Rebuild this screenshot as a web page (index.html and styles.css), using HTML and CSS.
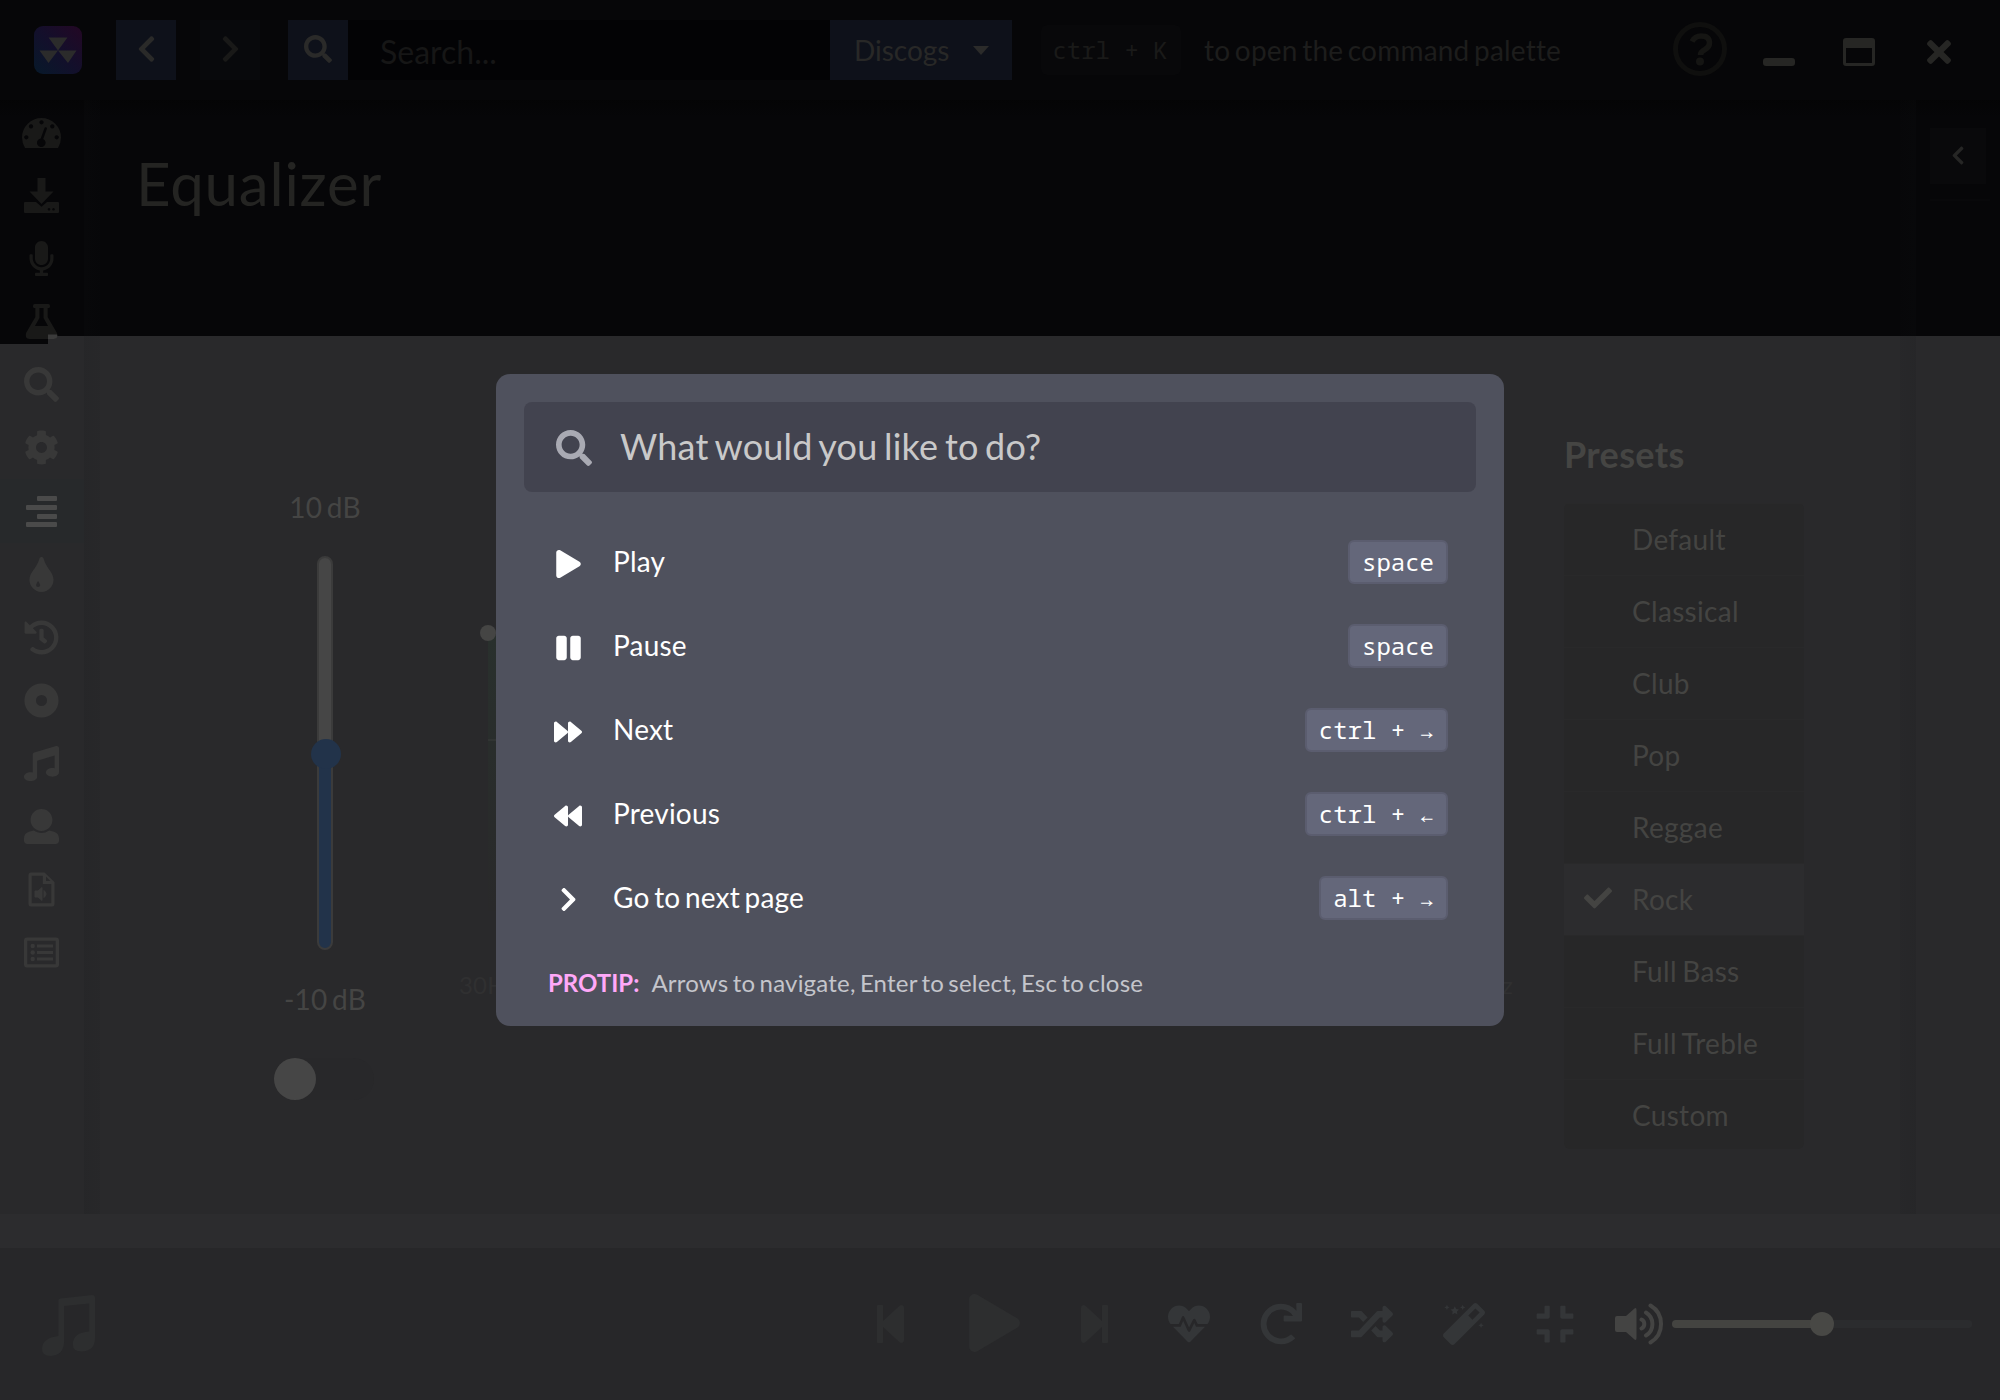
FILE: index.html
```html
<!DOCTYPE html>
<html lang="en">
<head>
<meta charset="utf-8">
<title>Equalizer</title>
<link rel="stylesheet" href="styles.css">
</head>
<body>
<svg class="defs" width="0" height="0">
  <symbol id="search" viewBox="0 0 512 512"><path d="M505 442.7L405.3 343c-4.500-4.500-10.600-7-17-7H372c27.600-35.300 44-79.700 44-128C416 93.100 322.900 0 208 0S0 93.100 0 208s93.100 208 208 208c48.300 0 92.700-16.400 128-44v16.300c0 6.400 2.500 12.500 7 17l99.700 99.700c9.400 9.400 24.600 9.400 33.900 0l28.300-28.300c9.400-9.400 9.400-24.600.1-34zM208 336c-70.700 0-128-57.200-128-128 0-70.700 57.200-128 128-128 70.700 0 128 57.200 128 128 0 70.700-57.200 128-128 128z"/></symbol>
  <symbol id="chevron" viewBox="0 0 320 512"><path d="M285.476 272.971L91.132 467.314c-9.373 9.373-24.569 9.373-33.941 0l-22.667-22.667c-9.357-9.357-9.375-24.522-.04-33.901L188.505 256 34.484 101.255c-9.335-9.379-9.317-24.544.04-33.901l22.667-22.667c9.373-9.373 24.569-9.373 33.941 0L285.475 239.030c9.373 9.372 9.373 24.568.001 33.941z"/></symbol>
  <symbol id="play" viewBox="0 0 448 512"><path d="M424.400 214.700L72.400 6.600C43.800-10.300 0 6.100 0 47.900V464c0 37.500 40.700 60.100 72.400 41.300l352-208c31.400-18.500 31.500-64.100 0-82.600z"/></symbol>
  <symbol id="forward" viewBox="0 0 512 512"><path d="M500.500 231.400l-192-160C287.900 54.300 256 68.600 256 96v320c0 27.400 31.900 41.800 52.500 24.600l192-160c15.300-12.800 15.300-36.400 0-49.200zm-256 0l-192-160C31.900 54.300 0 68.600 0 96v320c0 27.400 31.900 41.800 52.500 24.600l192-160c15.300-12.800 15.300-36.400 0-49.200z"/></symbol>
  <symbol id="step" viewBox="64 32 320 448"><path d="M64 468V44c0-6.600 5.400-12 12-12h48c6.600 0 12 5.400 12 12v176.400l195.500-181C352.100 22.300 384 36.600 384 64v384c0 27.400-31.900 41.700-52.500 24.600L136 292.700V468c0 6.600-5.400 12-12 12H76c-6.600 0-12-5.400-12-12z"/></symbol>
  <symbol id="flask" viewBox="0 0 512 512"><path fill-rule="evenodd" d="M154 0h204q22 0 22 24v16q0 20-22 20h-12v130l134 232q28 90-50 90H82q-78 0-50-90L166 190V60h-12q-22 0-22-20V24q0-24 22-24zM226 60v145l-66 115h192l-66-115V60z"/></symbol>
</svg>
<div class="app">
  <header class="topbar">
    <svg class="logo" viewBox="0 0 48 48">
      <defs><linearGradient id="lg" x1="0" y1="1" x2="1" y2="0"><stop offset="0" stop-color="#07192a"/><stop offset=".5" stop-color="#130f2b"/><stop offset="1" stop-color="#230724"/></linearGradient></defs>
      <rect width="48" height="48" rx="9" fill="url(#lg)"/>
      <path d="M14.500 11.500h19L24 24.500h18.500L34 37 24 24.500 14.500 37 5.500 24.500H24z" fill="#2b2b2b"/>
    </svg>
    <button class="square back"><svg class="flip chev"><use href="#chevron"/></svg></button>
    <button class="square next"><svg class="chev"><use href="#chevron"/></svg></button>
    <div class="searchbox">
      <button class="square"><svg class="glass"><use href="#search"/></svg></button>
      <span class="field">Search...</span>
      <span class="source">Discogs<i class="caret"></i></span>
    </div>
    <kbd class="hintkey">ctrl + K</kbd>
    <span class="hint">to open the command palette</span>
    <svg class="help" viewBox="0 0 54 54"><circle cx="27" cy="27" r="24.500" fill="none" stroke="#0f0f0e" stroke-width="5"/><path d="M19 19.500Q22 14 28 14q8.500 0 8.500 7 0 4-4.500 6.500-4.500 2.300-4.500 5.500" fill="none" stroke="#151513" stroke-width="5.500"/><circle cx="27" cy="39.500" r="4" fill="#151513"/></svg>
    <div class="window">
      <svg viewBox="0 0 32 28"><rect y="20" width="32" height="8" rx="3"/></svg>
      <svg viewBox="0 0 32 28"><path fill-rule="evenodd" d="M3 0h26q3 0 3 3v22q0 3-3 3H3q-3 0-3-3V3q0-3 3-3zM3 10v15h26V10z"/></svg>
      <svg class="close" viewBox="0 80 352 352"><path d="M242.720 256l100.070-100.070c12.280-12.280 12.280-32.190 0-44.480l-22.240-22.240c-12.280-12.280-32.190-12.280-44.480 0L176 189.280 75.930 89.210c-12.280-12.280-32.190-12.280-44.480 0L9.210 111.450c-12.280 12.280-12.280 32.190 0 44.480L109.280 256 9.210 356.070c-12.280 12.280-12.280 32.190 0 44.480l22.240 22.240c12.280 12.280 32.200 12.280 44.480 0L176 322.720l100.070 100.070c12.280 12.280 32.200 12.280 44.480 0l22.240-22.240c12.280-12.280 12.280-32.190 0-44.480L242.720 256z"/></svg>
    </div>
  </header>

  <div class="middle">
    <nav class="side">
      <a class="dim"><svg class="wide" viewBox="0 0 39 30"><path fill-rule="evenodd" d="M3 30Q0 25 0 19.500A19.500 19.500 0 0 1 39 19.500Q39 25 36 30zM22.500 10l-3.800 10.500a4.300 4.300 0 1 0 2.500.4L25 10.500a1.300 1.300 0 0 0-2.500-.5zM19.500 2.200a2.100 2.100 0 1 0 .01 0zM9 6.300a2.100 2.100 0 1 0 .01 0zM30.300 6.300a2.100 2.100 0 1 0 .01 0zM4.300 17.200a2.100 2.100 0 1 0 .01 0zM34.700 17.200a2.100 2.100 0 1 0 .01 0z"/></svg></a>
      <a class="dim"><svg viewBox="0 0 35 35"><path fill-rule="evenodd" d="M13.500 0h8v13.500h8L17.500 26 5.500 13.500h8zM0 25q0-1 1-1h11l5.500 4.800L23 24h11q1 0 1 1v9q0 1-1 1H1q-1 0-1-1zM25 30a1.300 1.300 0 1 0 .01 0zM29.500 30a1.300 1.300 0 1 0 .01 0z"/></svg></a>
      <a class="dim"><svg viewBox="-80 0 512 512"><path d="M176 352c53.020 0 96-42.980 96-96V96c0-53.020-42.980-96-96-96S80 42.980 80 96v160c0 53.020 42.980 96 96 96zm160-160h-16c-8.840 0-16 7.160-16 16v48c0 74.800-64.490 134.820-140.790 127.380C96.710 376.890 48 317.110 48 250.300V208c0-8.840-7.160-16-16-16H16c-8.840 0-16 7.160-16 16v40.160c0 89.640 63.970 169.550 152 181.690V464H96c-8.840 0-16 7.160-16 16v16c0 8.840 7.160 16 16 16h160c8.840 0 16-7.160 16-16v-16c0-8.840-7.160-16-16-16h-56v-33.770C285.710 418.470 352 344.900 352 256v-48c0-8.840-7.160-16-16-16z"/></svg></a>
      <a class="dim"><svg viewBox="0 0 35 35"><defs><clipPath id="corner"><rect x="24" y="30.500" width="11" height="5"/></clipPath></defs><use href="#flask" width="35" height="35"/><use href="#flask" width="35" height="35" clip-path="url(#corner)" fill="#3b3b3b"/></svg></a>
      <a><svg><use href="#search"/></svg></a>
      <a><svg viewBox="0 0 512 512"><path d="M487.400 315.700l-42.600-24.600c4.300-23.200 4.300-47 0-70.200l42.600-24.600c4.900-2.800 7.100-8.600 5.500-14-11.100-35.600-30-67.800-54.700-94.600-3.800-4.100-10-5.100-14.800-2.300L380.800 110c-17.900-15.400-38.500-27.300-60.800-35.100V25.800c0-5.600-3.900-10.500-9.400-11.700-36.700-8.200-74.300-7.800-109.200 0-5.500 1.200-9.400 6.100-9.400 11.700V75c-22.200 7.900-42.800 19.800-60.800 35.100L88.700 85.500c-4.900-2.800-11-1.900-14.800 2.300-24.700 26.700-43.600 58.900-54.700 94.600-1.700 5.400.6 11.200 5.500 14L67.300 221c-4.300 23.200-4.300 47 0 70.200l-42.600 24.600c-4.900 2.800-7.100 8.600-5.500 14 11.100 35.600 30 67.800 54.700 94.600 3.800 4.100 10 5.100 14.800 2.300l42.600-24.600c17.900 15.400 38.500 27.300 60.800 35.100v49.200c0 5.600 3.900 10.500 9.400 11.700 36.700 8.200 74.300 7.800 109.200 0 5.500-1.200 9.400-6.100 9.400-11.700v-49.200c22.200-7.900 42.800-19.800 60.800-35.100l42.600 24.600c4.900 2.800 11 1.900 14.800-2.300 24.700-26.700 43.600-58.900 54.700-94.600 1.500-5.500-.7-11.300-5.600-14.100zM256 336c-44.100 0-80-35.900-80-80s35.900-80 80-80 80 35.900 80 80-35.900 80-80 80z"/></svg></a>
      <a class="active"><svg viewBox="0 0 35 35"><rect x="13" y="2" width="20" height="5" rx="1"/><rect x="2" y="11" width="31" height="5" rx="1"/><rect x="13" y="20" width="20" height="5" rx="1"/><rect x="2" y="28" width="31" height="5" rx="1"/></svg></a>
      <a><svg viewBox="-80 0 512 512"><path fill-rule="evenodd" d="M205.220 22.090c-7.940-28.780-49.440-30.120-58.440 0C100.010 179.850 0 222.720 0 333.910 0 432.350 78.720 512 176 512s176-79.650 176-178.090c0-111.750-99.790-153.340-146.780-311.820zM126 350q30 42 30 60a30 30 0 0 1-60 0q0-18 30-60z"/></svg></a>
      <a><svg viewBox="0 0 512 512"><path d="M504 255.531c.253 136.640-111.180 248.372-247.820 248.468-59.015.042-113.223-20.530-155.822-54.911-11.077-8.940-11.905-25.541-1.839-35.607l11.267-11.267c8.609-8.609 22.353-9.551 31.891-1.984C173.062 425.135 212.781 440 256 440c101.705 0 184-82.311 184-184 0-101.705-82.311-184-184-184-48.814 0-93.149 18.969-126.068 49.932l50.754 50.754c10.080 10.080 2.941 27.314-11.313 27.314H24c-8.837 0-16-7.163-16-16V38.627c0-14.254 17.234-21.393 27.314-11.314l49.372 49.372C129.209 34.136 189.552 8 256 8c136.810 0 247.747 110.780 248 247.531zm-180.912 78.784l9.823-12.630c8.138-10.463 6.253-25.542-4.210-33.679L288 256.349V152c0-13.255-10.745-24-24-24h-16c-13.255 0-24 10.745-24 24v135.651l65.409 50.874c10.463 8.137 25.541 6.253 33.679-4.210z"/></svg></a>
      <a><svg viewBox="0 0 35 35"><circle cx="17.500" cy="17.500" r="11.300" fill="none" stroke="#383838" stroke-width="11.500"/></svg></a>
      <a><svg viewBox="0 0 512 512"><path d="M512 32c0-22-21-37-42-30.500L150.400 96c-13.300 4.200-22.400 16.500-22.400 30.500v261.420c-10-2.380-20.700-3.920-32-3.920-53 0-96 28.650-96 64s43 64 96 64 96-28.650 96-64V214.310l256-75.020v184.630c-10-2.380-20.700-3.920-32-3.920-53 0-96 28.650-96 64s43 64 96 64 96-28.650 96-64z"/></svg></a>
      <a><svg viewBox="0 0 512 512"><path d="M256 0c88.366 0 160 71.634 160 160s-71.634 160-160 160S96 248.366 96 160 167.634 0 256 0zm183.283 333.821l-71.313-17.828c-74.923 53.890-165.738 41.864-223.940 0l-71.313 17.828C29.981 344.505 0 382.903 0 426.955V464c0 26.510 21.490 48 48 48h416c26.510 0 48-21.490 48-48v-37.045c0-44.052-29.981-82.450-72.717-93.134z"/></svg></a>
      <a><svg viewBox="0 0 35 35"><path fill-rule="evenodd" d="M7 .5h13.500L30.500 10v22q0 2.500-2.500 2.500H7Q4.500 34.500 4.500 32V3Q4.500.5 7 .5zM7.700 3.700v27.600h19.600V12h-8.500V3.700zM22 4.500V9h4.500z"/><path d="M11 19h3l4-3.500v13L14 25h-3zM20 18.500q4 3.500 0 7z" stroke="#383838" stroke-width="1"/></svg></a>
      <a><svg viewBox="0 0 35 35"><path fill-rule="evenodd" d="M3 2.500h29q3 0 3 3v24q0 3-3 3H3q-3 0-3-3v-24q0-3 3-3zM3.300 5.800v23.400h28.400V5.800z"/><circle cx="8.700" cy="11" r="2.200"/><circle cx="8.700" cy="17.500" r="2.200"/><circle cx="8.700" cy="24" r="2.200"/><path d="M13 9.500h16v3H13zM13 16h16v3H13zM13 22.500h16v3H13z"/></svg></a>
    </nav>
    <main class="page">
      <h1>Equalizer</h1>
      <div class="equalizer">
        <div class="preamp">
          <span>10 dB</span>
          <div class="vslider"><i></i></div>
          <span>-10 dB</span>
          <div class="toggle"><i></i></div>
        </div>
        <div class="chart">
          <svg viewBox="0 0 1040 300"><defs><linearGradient id="area" x1="0" y1="0" x2="0" y2="1"><stop offset="0" stop-color="#29302d"/><stop offset="1" stop-color="#29292a"/></linearGradient></defs><path d="M8 8Q200 60 500 180T1016 30V286H8z" fill="url(#area)"/><path d="M8 115h1008" stroke="#3a3d3b"/><circle cx="8" cy="8" r="8" fill="#454544"/></svg>
          <div class="freqs"><span>30Hz</span><span>15KHz</span></div>
        </div>
        <section class="presets">
          <h2>Presets</h2>
          <ul>
            <li>Default</li><li>Classical</li><li>Club</li><li>Pop</li><li>Reggae</li>
            <li class="on"><svg viewBox="0 62 512 388"><path d="M173.898 439.404l-166.400-166.400c-9.997-9.997-9.997-26.206 0-36.204l36.203-36.204c9.997-9.998 26.207-9.998 36.204 0L192 312.690 432.095 72.596c9.997-9.997 26.207-9.997 36.204 0l36.203 36.204c9.997 9.997 9.997 26.206 0 36.204l-294.400 294.401c-9.998 9.997-26.207 9.997-36.204-.001z"/></svg>Rock</li>
            <li>Full Bass</li><li>Full Treble</li><li>Custom</li>
          </ul>
        </section>
      </div>
    </main>
    <aside class="queue"><button><svg class="flip"><use href="#chevron"/></svg></button><hr></aside>
  </div>
  <div class="seek"></div>
  <footer class="player">
    <svg class="cover" viewBox="0 0 55 61" preserveAspectRatio="none"><path fill-rule="evenodd" d="M17 5.500Q17 4 19 3.500L52 0q3 0 3 3v40q0 13-14 13.500-9 0-9-7 0-12 17-13V8.500L23 11v35q0 14-14 15-9 0-9-7 0-11 17-13z"/></svg>
    <svg class="step"><use href="#step"/></svg>
    <svg class="bigplay"><use href="#play"/></svg>
    <svg class="step flip"><use href="#step"/></svg>
    <div class="modes">
      <svg viewBox="0 0 512 512"><path d="M320.200 243.800l-49.700 99.400c-6 12.100-23.400 11.700-28.900-.6l-56.900-126.300-30 71.700H60.600l182.500 186.500c7.100 7.300 18.600 7.300 25.700 0L451.400 288H342.300l-22.100-44.200zM473.700 73.900l-2.400-2.500c-51.500-52.600-135.800-52.600-187.400 0L256 100l-27.900-28.500c-51.500-52.700-135.900-52.700-187.400 0l-2.400 2.400C-10.400 123.700-12.500 203 31 256h102.400l35.900-86.200c5.400-12.900 23.600-13.100 29.400-.4l58.200 129.300 49-97.900c5.900-11.800 22.700-11.800 28.600 0l27.600 55.200H481c43.500-53 41.400-132.300-7.300-182.100z"/></svg>
      <svg viewBox="0 0 512 512"><path d="M500.330 0h-47.410a12 12 0 0 0-12 12.570l4 82.760A247.420 247.420 0 0 0 256 8C119.340 8 7.900 119.530 8 256.190 8.100 393.070 119.100 504 256 504a247.100 247.100 0 0 0 166.180-63.910 12 12 0 0 0 .48-17.430l-34-34a12 12 0 0 0-16.380-.55A176 176 0 1 1 402.100 157.800l-101.530-4.870a12 12 0 0 0-12.570 12v47.410a12 12 0 0 0 12 12h200.330a12 12 0 0 0 12-12V12a12 12 0 0 0-12-12z"/></svg>
      <svg viewBox="0 0 512 512"><path d="M504.971 359.029c9.373 9.373 9.373 24.569 0 33.941l-80 79.984c-15.010 15.010-40.971 4.490-40.971-16.971V416h-58.785a12.004 12.004 0 0 1-8.773-3.812l-70.556-75.596 53.333-57.143L352 336h32v-39.981c0-21.438 25.943-31.998 40.971-16.971l80 79.981zM12 176h84l52.781 56.551 53.333-57.143-70.556-75.596A11.999 11.999 0 0 0 122.785 96H12c-6.627 0-12 5.373-12 12v56c0 6.627 5.373 12 12 12zm372 0v39.984c0 21.460 25.961 31.980 40.971 16.971l80-79.984c9.373-9.373 9.373-24.569 0-33.941l-80-79.981C409.943 24.021 384 34.582 384 56.019V96h-58.785a12.004 12.004 0 0 0-8.773 3.812L96 336H12c-6.627 0-12 5.373-12 12v56c0 6.627 5.373 12 12 12h110.785c3.326 0 6.503-1.381 8.773-3.812L352 176h32z"/></svg>
      <svg viewBox="0 0 512 512"><path d="M502.620 94.230L417.770 9.380C411.530 3.120 403.340 0 395.150 0c-8.190 0-16.380 3.120-22.630 9.380L9.380 372.520c-12.500 12.500-12.500 32.760 0 45.250l84.850 84.850c6.250 6.250 14.440 9.370 22.620 9.370 8.190 0 16.380-3.120 22.630-9.370l363.140-363.150c12.500-12.480 12.500-32.750 0-45.240zM359.450 203.460l-50.910-50.910 86.600-86.600 50.910 50.910-86.600 86.600z"/><path d="M144 40l16 33 35 5-25 25 6 36-32-17-32 17 6-36-25-25 35-5zM48 22l10 22 22 10-22 10-10 22-10-22-22-10 22-10zM240 22l10 22 22 10-22 10-10 22-10-22-22-10 22-10zM464 240l10 22 22 10-22 10-10 22-10-22-22-10 22-10z"/></svg>
      <svg viewBox="-32 0 512 512"><path d="M436 192H312c-13.300 0-24-10.700-24-24V44c0-6.600 5.400-12 12-12h40c6.600 0 12 5.400 12 12v84h84c6.600 0 12 5.400 12 12v40c0 6.600-5.400 12-12 12zm-276-24V44c0-6.600-5.400-12-12-12h-40c-6.600 0-12 5.400-12 12v84H12c-6.600 0-12 5.400-12 12v40c0 6.600 5.400 12 12 12h124c13.300 0 24-10.700 24-24zm0 300V344c0-13.300-10.700-24-24-24H12c-6.600 0-12 5.400-12 12v40c0 6.600 5.400 12 12 12h84v84c0 6.600 5.400 12 12 12h40c6.600 0 12-5.400 12-12zm192 0v-84h84c6.600 0 12-5.400 12-12v-40c0-6.600-5.400-12-12-12H312c-13.300 0-24 10.700-24 24v124c0 6.600 5.400 12 12 12h40c6.600 0 12-5.400 12-12z"/></svg>
    </div>
    <svg class="volume" viewBox="0 0 49 42"><path d="M2 13h9l8.500-7.500q2-1.300 2 1.500v28q0 2.800-2 1.500L11 29H2q-2 0-2-2V15q0-2 2-2z"/><path d="M26.500 16.500a5 5 0 0 1 0 9M31 9.500a13.500 13.500 0 0 1 0 23M35.500 2.500a21.500 21.500 0 0 1 0 37" fill="none" stroke="#444443" stroke-width="4" stroke-linecap="round"/></svg>
    <div class="volbar"><i></i></div>
  </footer>
</div>

<div class="palette">
  <div class="prompt"><svg><use href="#search"/></svg><span>What would you like to do?</span></div>
  <ul>
    <li><svg class="p"><use href="#play"/></svg><span>Play</span><kbd>space</kbd></li>
    <li><svg class="p" viewBox="0 0 448 512"><path d="M144 479H48c-26.500 0-48-21.500-48-48V79c0-26.500 21.500-48 48-48h96c26.500 0 48 21.500 48 48v352c0 26.500-21.500 48-48 48zm304-48V79c0-26.500-21.500-48-48-48h-96c-26.500 0-48 21.500-48 48v352c0 26.500 21.500 48 48 48h96c26.500 0 48-21.500 48-48z"/></svg><span>Pause</span><kbd>space</kbd></li>
    <li><svg><use href="#forward"/></svg><span>Next</span><kbd>ctrl + →</kbd></li>
    <li><svg class="flip"><use href="#forward"/></svg><span>Previous</span><kbd>ctrl + ←</kbd></li>
    <li><svg class="c"><use href="#chevron"/></svg><span>Go to next page</span><kbd>alt + →</kbd></li>
  </ul>
  <p><b>PROTIP:</b><span>Arrows to navigate, Enter to select, Esc to close</span></p>
</div>
</body>
</html>
```
FILE: styles.css
```css
* { box-sizing: border-box; margin: 0; padding: 0; }
body { width: 2000px; height: 1400px; overflow: hidden; position: relative; font: 28px/40px Lato, sans-serif; letter-spacing: .2px; word-spacing: -2.800px; background: #29292b; }
.defs { position: absolute; }
svg { display: block; flex: none; fill: currentColor; }
button { border: 0; background: none; color: inherit; display: flex; align-items: center; justify-content: center; }
ul { list-style: none; }
.flip { transform: scaleX(-1); }

.app {
  height: 1400px; display: grid; grid-template-rows: 100px 1114px 34px 152px;
  background:
    linear-gradient(#060608, #060608) 0 0 / 48px 344px no-repeat,
    linear-gradient(#060608, #060608) 0 0 / 100% 336px no-repeat,
    #29292b;
}

/* top bar */
.topbar { display: flex; align-items: center; padding-left: 34px; background: #060608; color: #2a2a29; }
.logo { width: 48px; height: 48px; margin-right: 34px; }
.square { width: 60px; height: 60px; background: #0e111a; }
.square.next { margin: 0 28px 0 24px; background: #08090c; color: #191918; }
.chev { width: 19px; height: 30px; margin-top: -2px; }
.glass { width: 28px; height: 28px; margin-top: -2px; }
.searchbox { display: flex; width: 724px; height: 60px; background: #030305; }
.field { flex: 1; padding-left: 32px; font-size: 32px; line-height: 64px; letter-spacing: 0; color: #161616; }
.source { width: 182px; background: #0e111a; padding-left: 24px; line-height: 63px; letter-spacing: 0; display: flex; align-items: center; color: #282827; }
.caret { margin-left: 24px; border: 8px solid transparent; border-top: 9px solid #2b2b2a; border-bottom: 0; }
kbd { font: 24px/40px "Noto Sans Mono", "DejaVu Sans Mono", monospace; letter-spacing: 0; word-spacing: 0; }
.hintkey { width: 140px; height: 50px; margin-left: 29px; border-radius: 6px; padding-right: 2px; text-align: center; line-height: 50px; background: #08080a; color: #1a1a19; }
.hint { width: 492px; padding-left: 23px; margin-top: -1px; color: #1d1d1c; }
.help { width: 54px; height: 54px; margin: -2px 36px 0 0; }
.window { display: flex; gap: 48px; color: #262624; align-items: center; margin-top: 4px; }
.window svg { width: 32px; height: 28px; }
.window .close { width: 24px; height: 24px; margin-left: 4px; }

/* middle band */
.middle { display: grid; grid-template-columns: 84px 1832px 84px; min-height: 0; background: linear-gradient(rgba(3,3,3,.5), rgba(3,3,3,0)) 0 0 / 100% 18px no-repeat; }
.side { padding-top: 1px; color: #383838; }
.side a { display: flex; height: 63.080px; align-items: center; justify-content: center; padding-right: 1px; }
.side svg { width: 35px; height: 35px; }
.side .wide { width: 39px; height: 30px; }
.side .dim { color: #191918; }
.side .active { color: #4a4a4a; background: #27292b; }
.page {
  padding: 44px 96px 0 52px;
  background:
    linear-gradient(90deg, rgba(20,22,24,.13), rgba(20,22,24,.08)) 0 0 / 16px 100% no-repeat,
    linear-gradient(90deg, rgba(20,22,24,.08), rgba(20,22,24,.13)) 100% 0 / 16px 100% no-repeat;
}
h1 { font-size: 60px; line-height: 78px; font-weight: 400; letter-spacing: .8px; color: #242422; }
.equalizer { display: flex; color: #454544; }
.preamp { width: 160px; margin: 265px 0 0 109px; display: flex; flex-direction: column; align-items: center; }
.vslider { width: 16px; height: 394px; margin: 29px 0 29px; border-radius: 8px; border: 2px solid #3b3b3b; background: linear-gradient(#464646 50%, #22334a 50%); display: flex; align-items: center; justify-content: center; }
.vslider i { flex: none; width: 30px; height: 30px; margin: 2px 0 0 2px; border-radius: 50%; background: #22334a; }
.toggle { width: 100px; height: 42px; margin: 39px 2px 0 0; border-radius: 21px; background: #28282a; }
.toggle i { display: block; width: 42px; height: 42px; border-radius: 50%; background: #464646; }
.chart { width: 1054px; margin: 403px 0 0 54px; }
.chart svg { width: 1040px; height: 300px; margin-left: 21px; }
.freqs { display: flex; justify-content: space-between; margin-top: 40px; font-size: 24px; color: #303031; }
.presets { margin: 207px 0 0 51px; }
h2 { font-size: 36px; line-height: 50px; letter-spacing: .35px; color: #454543; }
.presets ul { width: 240px; margin-top: 24px; border-radius: 6px; background: #272728; color: #444442; }
.presets li { height: 72px; line-height: 70px; padding-left: 68px; letter-spacing: .3px; word-spacing: -2px; border-top: 1px solid #29292a; position: relative; }
.presets li:last-child { height: 70px; }
.presets .on { background: #2c2c2e; }
.presets li svg { position: absolute; left: 20px; top: 23px; width: 28px; height: 22px; }
.queue { padding: 28px 10px 0 14px; }
.queue button { width: 56px; height: 56px; background: #09090b; color: #262625; }
.queue svg { width: 14px; height: 21px; margin-top: -1px; }
.queue hr { border: 0; height: 2px; margin-top: 15px; background: #08080a; }

/* player */
.seek { background: #2c2c2e; }
.player { display: flex; align-items: center; background: #272729; color: #2d2e2f; }
.cover { width: 53px; height: 61px; margin: 2px 782px 0 42px; }
.step { width: 27px; height: 38px; }
.bigplay { width: 51px; height: 58px; margin: -2px 61px 0 65px; }
.modes { display: flex; gap: 49.500px; margin-left: 60px; color: #343638; }
.modes svg { width: 42px; height: 42px; }
.volume { width: 49px; height: 42px; margin-left: 39px; color: #444443; }
.volbar { width: 300px; height: 8px; margin-left: 8px; border-radius: 4px; background: linear-gradient(90deg, #444441 50%, #2b2c2e 50%); display: flex; align-items: center; justify-content: center; }
.volbar i { width: 24px; height: 24px; border-radius: 50%; background: #484845; }

/* command palette */
.palette { position: absolute; left: 496px; top: 374px; width: 1008px; height: 652px; padding: 28px; border-radius: 14px; background: #4f515d; color: #fff; }
.prompt { height: 90px; border-radius: 8px; background: #42434f; display: flex; align-items: center; padding-left: 32px; font-size: 36px; color: #c9c9c9; }
.prompt svg { width: 36px; height: 36px; margin: 2px 28px 0 0; color: #a9aab3; }
.prompt span { margin-top: -2px; }
.palette ul { padding: 28px 28px 0 30px; }
.palette li { height: 84px; display: flex; align-items: center; }
.palette li svg { width: 28px; height: 28px; margin-top: 3px; }
.palette li .p { width: 25px; margin-left: 2px; margin-right: 1px; }
.palette li .c { width: 17px; height: 27px; margin: 3px 5px 0 6px; }
.palette li span { flex: 1; margin-left: 31px; padding-bottom: 2px; }
.palette kbd { height: 44px; padding: 0 12px; border: 2px solid #5b5d6f; border-radius: 6px; background: #64677a; }
.palette p { padding: 23px 0 0 24px; display: flex; gap: 12px; font-size: 24px; word-spacing: -2px; color: #c4c5cb; }
.palette b { letter-spacing: 0; color: #ffa8f8; }
```
